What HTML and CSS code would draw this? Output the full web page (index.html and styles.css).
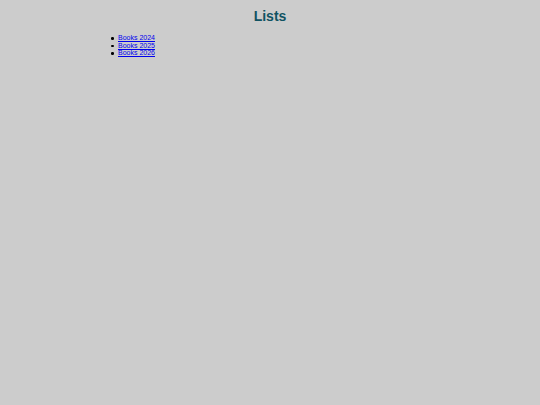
FILE: index.html
```html
<!DOCTYPE html>
<html>
<head>
<meta charset="utf-8">
<link rel="stylesheet" href="styles.css">
</head>
<body class="page">
<h1 class="title">Lists</h1>
<ul class="lists">
<li class="item"><a href="#">Books 2024</a></li>
<li class="item"><a href="#">Books 2025</a></li>
<li class="item"><a href="#">Books 2026</a></li>
</ul>
</body>
</html>
```
FILE: styles.css
```css
html, body { margin: 0; padding: 0; }
.page {
  background: #cccccc;
  font-family: "Liberation Sans", Arial, sans-serif;
  width: 540px;
  height: 405px;
  overflow: hidden;
}
.title {
  margin: 0;
  padding-top: 8px;
  text-align: center;
  font-size: 14px;
  line-height: 16px;
  font-weight: bold;
  color: #0f5262;
}
.lists {
  list-style: none;
  margin: 10px 0 0 0;
  padding-left: 118px;
  font-size: 7px;
  line-height: 7.5px;
}
.item { position: relative; }
.item::before {
  content: "";
  position: absolute;
  left: -7px;
  top: 3px;
  width: 2.5px;
  height: 2.5px;
  border-radius: 50%;
  background: #000;
}
.lists a { color: #0000ee; }
```
